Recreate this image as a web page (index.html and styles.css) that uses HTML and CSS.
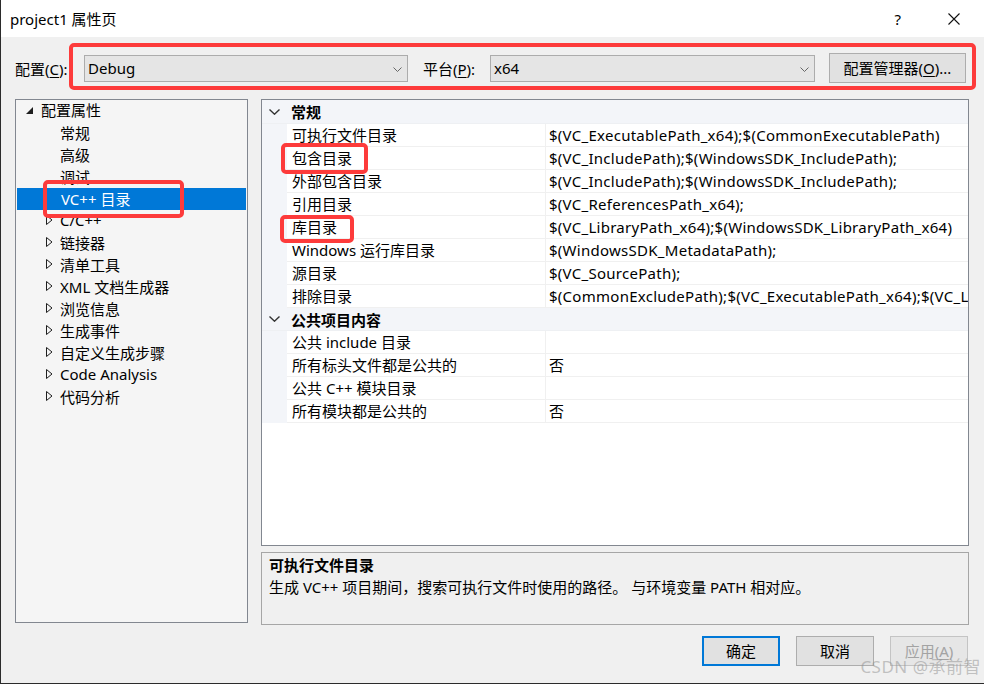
FILE: index.html
```html
<!DOCTYPE html>
<html lang="zh-CN">
<head>
	<meta charset="UTF-8">
	<title>project1 属性页</title>
	<link rel="stylesheet" href="styles.css">
</head>
<body>
<div class="window">
	<div class="titlebar">
		<span class="title">project1 属性页</span>
		<span class="help">?</span>
		<svg class="close" width="12" height="12" viewBox="0 0 12 12"><path d="M0.5 0.5L11.5 11.5M11.5 0.5L0.5 11.5" stroke="#111" stroke-width="1.1" fill="none"/></svg>
	</div>

	<div class="toolbar">
		<span class="lbl lbl-config">配置(<u>C</u>):</span>
		<div class="combo combo-config">Debug
			<svg class="drop" width="9" height="5" viewBox="0 0 9 5"><path d="M0.5 0.5L4.5 4.5L8.5 0.5" stroke="#666" fill="none"/></svg>
		</div>
		<span class="lbl lbl-platform">平台(<u>P</u>):</span>
		<div class="combo combo-platform">x64
			<svg class="drop" width="9" height="5" viewBox="0 0 9 5"><path d="M0.5 0.5L4.5 4.5L8.5 0.5" stroke="#666" fill="none"/></svg>
		</div>
		<div class="btn btn-manager">配置管理器(<u>O</u>)...</div>
	</div>

	<div class="main">
		<div class="tree">
			<div class="node root"><span class="twisty"><svg width="7" height="7" viewBox="0 0 7 7"><path d="M7 0L7 7L0 7Z" fill="#1e1e1e"/></svg></span>配置属性</div>
			<div class="node leaf">常规</div>
			<div class="node leaf">高级</div>
			<div class="node leaf">调试</div>
			<div class="node leaf selected">VC++ 目录</div>
			<div class="node"><span class="twisty"><svg width="7" height="10" viewBox="0 0 7 10"><path d="M0.5 0.5L6 5L0.5 9.5Z" stroke="#1e1e1e" fill="none"/></svg></span>C/C++</div>
			<div class="node"><span class="twisty"><svg width="7" height="10" viewBox="0 0 7 10"><path d="M0.5 0.5L6 5L0.5 9.5Z" stroke="#1e1e1e" fill="none"/></svg></span>链接器</div>
			<div class="node"><span class="twisty"><svg width="7" height="10" viewBox="0 0 7 10"><path d="M0.5 0.5L6 5L0.5 9.5Z" stroke="#1e1e1e" fill="none"/></svg></span>清单工具</div>
			<div class="node"><span class="twisty"><svg width="7" height="10" viewBox="0 0 7 10"><path d="M0.5 0.5L6 5L0.5 9.5Z" stroke="#1e1e1e" fill="none"/></svg></span>XML 文档生成器</div>
			<div class="node"><span class="twisty"><svg width="7" height="10" viewBox="0 0 7 10"><path d="M0.5 0.5L6 5L0.5 9.5Z" stroke="#1e1e1e" fill="none"/></svg></span>浏览信息</div>
			<div class="node"><span class="twisty"><svg width="7" height="10" viewBox="0 0 7 10"><path d="M0.5 0.5L6 5L0.5 9.5Z" stroke="#1e1e1e" fill="none"/></svg></span>生成事件</div>
			<div class="node"><span class="twisty"><svg width="7" height="10" viewBox="0 0 7 10"><path d="M0.5 0.5L6 5L0.5 9.5Z" stroke="#1e1e1e" fill="none"/></svg></span>自定义生成步骤</div>
			<div class="node"><span class="twisty"><svg width="7" height="10" viewBox="0 0 7 10"><path d="M0.5 0.5L6 5L0.5 9.5Z" stroke="#1e1e1e" fill="none"/></svg></span>Code Analysis</div>
			<div class="node"><span class="twisty"><svg width="7" height="10" viewBox="0 0 7 10"><path d="M0.5 0.5L6 5L0.5 9.5Z" stroke="#1e1e1e" fill="none"/></svg></span>代码分析</div>
		</div>

		<div class="right">
			<div class="grid">
				<div class="cat cat-first"><span class="chev"><svg width="11" height="6" viewBox="0 0 11 6"><path d="M0.5 0.5L5.5 5.2L10.5 0.5" stroke="#333" stroke-width="1.4" fill="none"/></svg></span>常规</div>
				<div class="row"><span class="name">可执行文件目录</span><span class="val">$(VC_ExecutablePath_x64);$(CommonExecutablePath)</span></div>
				<div class="row"><span class="name">包含目录</span><span class="val">$(VC_IncludePath);$(WindowsSDK_IncludePath);</span></div>
				<div class="row"><span class="name">外部包含目录</span><span class="val">$(VC_IncludePath);$(WindowsSDK_IncludePath);</span></div>
				<div class="row"><span class="name">引用目录</span><span class="val">$(VC_ReferencesPath_x64);</span></div>
				<div class="row"><span class="name">库目录</span><span class="val">$(VC_LibraryPath_x64);$(WindowsSDK_LibraryPath_x64)</span></div>
				<div class="row"><span class="name">Windows 运行库目录</span><span class="val">$(WindowsSDK_MetadataPath);</span></div>
				<div class="row"><span class="name">源目录</span><span class="val">$(VC_SourcePath);</span></div>
				<div class="row"><span class="name">排除目录</span><span class="val">$(CommonExcludePath);$(VC_ExecutablePath_x64);$(VC_LibraryPath_x64)</span></div>
				<div class="cat"><span class="chev"><svg width="11" height="6" viewBox="0 0 11 6"><path d="M0.5 0.5L5.5 5.2L10.5 0.5" stroke="#333" stroke-width="1.4" fill="none"/></svg></span>公共项目内容</div>
				<div class="row"><span class="name">公共 include 目录</span><span class="val"></span></div>
				<div class="row"><span class="name">所有标头文件都是公共的</span><span class="val">否</span></div>
				<div class="row"><span class="name">公共 C++ 模块目录</span><span class="val"></span></div>
				<div class="row"><span class="name">所有模块都是公共的</span><span class="val">否</span></div>
			</div>
			<div class="desc">
				<div class="desc-title">可执行文件目录</div>
				<div class="desc-text">生成 VC++ 项目期间，搜索可执行文件时使用的路径。 与环境变量 PATH 相对应。</div>
			</div>
		</div>
	</div>

	<div class="footer">
		<div class="btn btn-ok">确定</div>
		<div class="btn">取消</div>
		<div class="btn btn-disabled">应用(<u>A</u>)</div>
	</div>

	<div class="mark mark-bar"></div>
	<div class="mark mark-vc"></div>
	<div class="mark mark-inc"></div>
	<div class="mark mark-lib"></div>
	<div class="watermark">CSDN @承前智</div>
</div>
</body>
</html>
```

FILE: styles.css
```css
*{
	margin: 0;
	padding: 0;
	box-sizing: border-box;
}
body{
	font-family: "Noto Sans", "Noto Sans CJK SC", sans-serif;
	font-size: 15px;
	color: #000;
	background: #fff;
}
u{text-decoration: underline; text-underline-offset: 2px;}

.window{
	position: relative;
	width: 984px;
	height: 684px;
	background: #f0f0f0;
	border-left: 1px solid #2b2b2b;
	border-bottom: 1px solid #2b2b2b;
	overflow: hidden;
}

/* title bar */
.titlebar{height: 37px; background: #fff; display: flex; align-items: center; padding-left: 9px;}
.title{flex: 1; font-size: 15px;}
.help{font-size: 15px; margin-right: 47px;}
.close{margin-right: 24px;}

/* config row */
.toolbar{display: flex; align-items: center; height: 30px; margin-top: 16px; padding-left: 14px;}
.lbl{white-space: nowrap;}
.lbl-config{width: 69px;}
.lbl-platform{width: 67px; margin-left: 15px;}
.combo{
	position: relative;
	height: 27px;
	line-height: 25px;
	padding-left: 3px;
	background: #e5e5e5;
	border: 1px solid #acacac;
}
.combo-config{width: 324px;}
.combo-platform{width: 325px;}
.drop{position: absolute; right: 5px; top: 11px;}
.btn{
	height: 30px;
	line-height: 28px;
	text-align: center;
	background: #e1e1e1;
	border: 1px solid #adadad;
	width: 78px;
}
.btn-manager{width: 137px; margin-left: 14px;}

/* main area */
.main{display: flex; margin-top: 16px; padding-left: 14px; height: 526px;}
.tree{
	width: 233px;
	height: 524px;
	background: #f5f5f5;
	border: 1px solid #828790;
}
.node{display: flex; align-items: center; height: 22px; padding-left: 30px; padding-bottom: 2px; white-space: nowrap;}
.node.root{padding-left: 10px; padding-bottom: 3px;}
.node.root .twisty{width: 15px; padding-top: 2px;}
.node.leaf{padding-left: 44px;}
.twisty{width: 14px; display: flex; align-items: center;}
.node.selected{background: #0078d7; color: #fff; margin-left: 1px; width: 229px;}

.right{margin-left: 13px; width: 708px; display: flex; flex-direction: column;}
.grid{
	height: 447px;
	background: #fff;
	border: 1px solid #828790;
	overflow: hidden;
}
.cat{
	display: flex;
	align-items: center;
	height: 23px;
	background: #f3f5f9;
	font-weight: bold;
	border-bottom: 1px solid #eef0f3;
}
.cat-first{height: 24px;}
.chev{width: 29px; padding-left: 7px; display: flex; align-items: center;}
.row{
	display: flex;
	height: 23px;
	line-height: 23px;
	padding-left: 25px;
	background: #f3f5f9;
	white-space: nowrap;
}
.name{width: 259px; padding-left: 5px; background: #fff; border-bottom: 1px solid #f0f0f0; border-right: 1px solid #f0f0f0;}
.val{flex: 1; padding-left: 3px; background: #fff; border-bottom: 1px solid #f0f0f0; overflow: hidden; letter-spacing: 0.27px;}

.desc{
	margin-top: 6px;
	height: 73px;
	border: 1px solid #a6a6a6;
	padding: 1px 7px;
	line-height: 22px;
}
.desc-title{font-weight: bold;}

/* bottom buttons */
.footer{display: flex; justify-content: flex-end; gap: 16px; margin-top: 11px; padding-right: 16px;}
.btn-ok{border: 2px solid #0078d7; line-height: 26px;}
.btn-disabled{color: #a3a3a3; background: #e6e6e6; border-color: #c4c4c4;}

/* red annotation boxes */
.mark{position: absolute; border: 4px solid #fd3b3b; border-radius: 5px;}
.mark-bar{left: 68px; top: 43px; width: 907px; height: 47px;}
.mark-vc{left: 42px; top: 180px; width: 141px; height: 38px;}
.mark-inc{left: 280px; top: 143px; width: 87px; height: 31px;}
.mark-lib{left: 279px; top: 215px; width: 74px; height: 28px;}

.watermark{
	position: absolute;
	right: 3px;
	bottom: 5px;
	font-size: 17px;
	color: rgba(150, 150, 150, 0.55);
	letter-spacing: 0.5px;
}
```
